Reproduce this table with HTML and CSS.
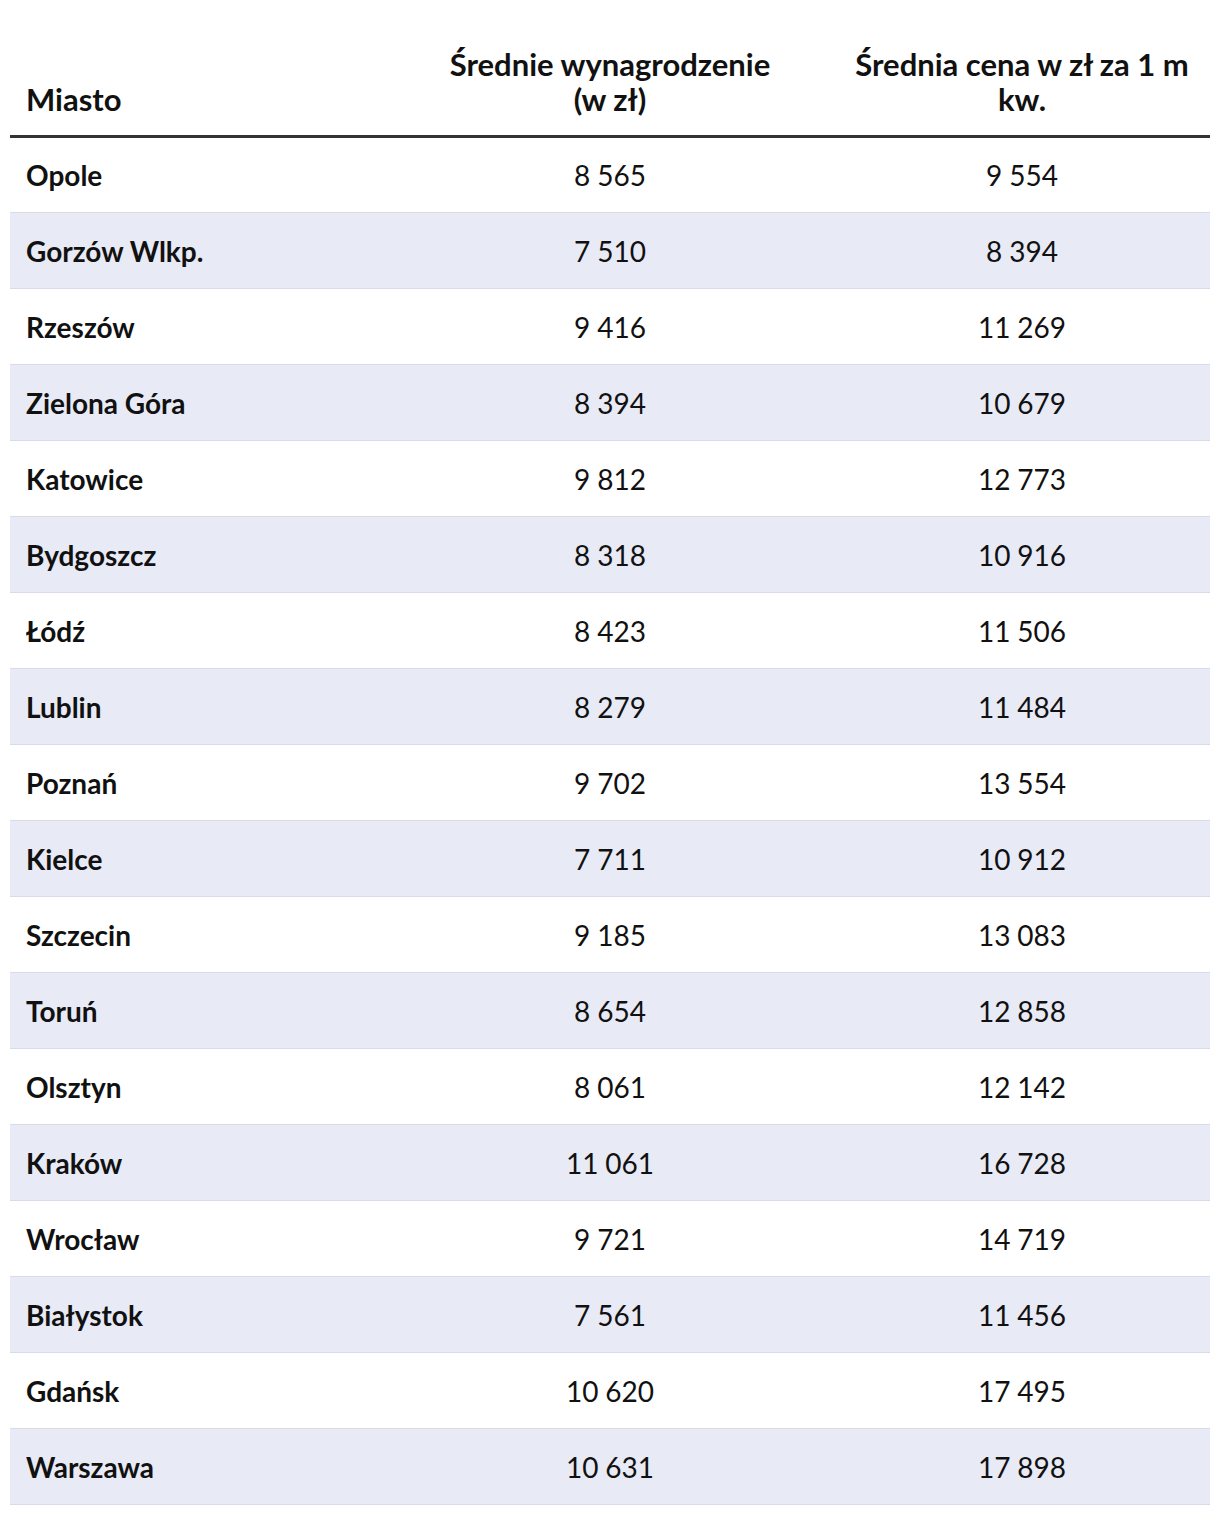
FILE: index.html
```html
<!DOCTYPE html>
<html lang="pl">
<head>
<meta charset="utf-8">
<link rel="stylesheet" href="styles.css">
</head>
<body>
<table class="data">
  <colgroup><col class="c1"><col class="c2"><col class="c3"></colgroup>
  <thead>
    <tr><th class="city">Miasto</th><th class="wide">Średnie wynagrodzenie (w zł)</th><th>Średnia cena w zł za 1 m kw.</th></tr>
  </thead>
  <tbody>
    <tr><td class="city">Opole</td><td>8&#8239;565</td><td>9&#8239;554</td></tr>
    <tr><td class="city">Gorzów Wlkp.</td><td>7&#8239;510</td><td>8&#8239;394</td></tr>
    <tr><td class="city">Rzeszów</td><td>9&#8239;416</td><td>11&#8239;269</td></tr>
    <tr><td class="city">Zielona Góra</td><td>8&#8239;394</td><td>10&#8239;679</td></tr>
    <tr><td class="city">Katowice</td><td>9&#8239;812</td><td>12&#8239;773</td></tr>
    <tr><td class="city">Bydgoszcz</td><td>8&#8239;318</td><td>10&#8239;916</td></tr>
    <tr><td class="city">Łódź</td><td>8&#8239;423</td><td>11&#8239;506</td></tr>
    <tr><td class="city">Lublin</td><td>8&#8239;279</td><td>11&#8239;484</td></tr>
    <tr><td class="city">Poznań</td><td>9&#8239;702</td><td>13&#8239;554</td></tr>
    <tr><td class="city">Kielce</td><td>7&#8239;711</td><td>10&#8239;912</td></tr>
    <tr><td class="city">Szczecin</td><td>9&#8239;185</td><td>13&#8239;083</td></tr>
    <tr><td class="city">Toruń</td><td>8&#8239;654</td><td>12&#8239;858</td></tr>
    <tr><td class="city">Olsztyn</td><td>8&#8239;061</td><td>12&#8239;142</td></tr>
    <tr><td class="city">Kraków</td><td>11&#8239;061</td><td>16&#8239;728</td></tr>
    <tr><td class="city">Wrocław</td><td>9&#8239;721</td><td>14&#8239;719</td></tr>
    <tr><td class="city">Białystok</td><td>7&#8239;561</td><td>11&#8239;456</td></tr>
    <tr><td class="city">Gdańsk</td><td>10&#8239;620</td><td>17&#8239;495</td></tr>
    <tr><td class="city">Warszawa</td><td>10&#8239;631</td><td>17&#8239;898</td></tr>
  </tbody>
</table>
</body>
</html>
```
FILE: styles.css
```css
html, body {
  margin: 0;
  padding: 0;
  background: #fff;
}
body {
  padding: 37px 10px 10px;
  font-family: Lato, "Liberation Sans", sans-serif;
  color: #111;
}
.data {
  width: 1200px;
  border-collapse: collapse;
  table-layout: fixed;
}
.c1 { width: 376px; }
.c2 { width: 448px; }
.c3 { width: 376px; }
.data th {
  font-weight: 700;
  font-size: 31px;
  line-height: 35px;
  text-align: center;
  vertical-align: bottom;
  padding: 10px 16px 18px;
  border-bottom: 3px solid #333;
}
.data th.wide {
  padding-left: 56px;
  padding-right: 56px;
}
.data th.city {
  text-align: left;
  padding-left: 16px;
}
.data td {
  height: 76px;
  padding: 0 16px;
  font-size: 28px;
  text-align: center;
  vertical-align: middle;
  border-bottom: 1px solid #dadbe8;
  box-sizing: border-box;
}
.data td.city {
  text-align: left;
  font-weight: 700;
  padding-left: 16px;
}
.data tbody tr:nth-child(even) td {
  background: #e8eaf6;
}
```
